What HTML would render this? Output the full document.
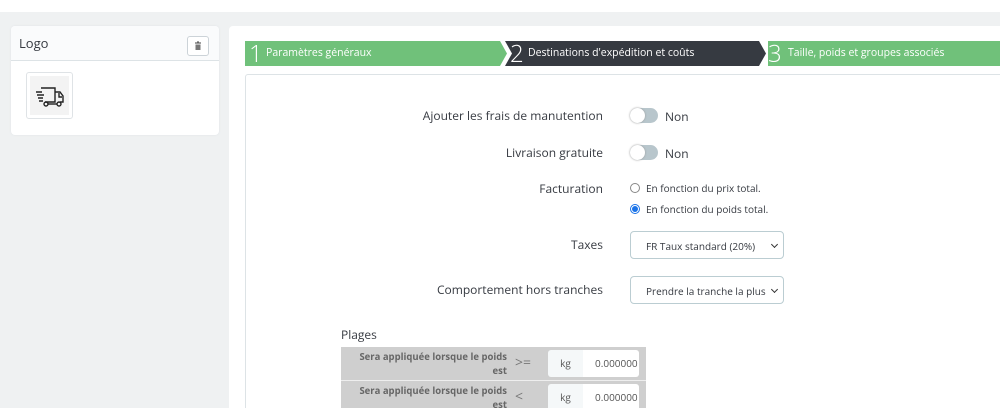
<!DOCTYPE html>
<html style="height:408px;overflow:hidden"><head><style>
body{margin:0;width:1000px;height:408px;overflow:hidden;background:#eff1f2;font-family:"Open Sans","Liberation Sans",sans-serif;color:#363a41;position:relative}
.top{position:absolute;left:0;top:0;width:1000px;height:12px;background:#fff}
.lp{position:absolute;left:11px;top:26px;width:208px;height:109px;background:#fff;border-radius:4px;box-shadow:0 0 2px #dfe3e6}
.lph{height:34px;border-bottom:1px solid #dde3e6;background:#fafbfc;border-radius:4px 4px 0 0}
.lph span{position:absolute;left:8px;top:8px;font-size:13px}
.del{position:absolute;left:176px;top:10px;width:20px;height:18px;border:1px solid #ccd3d8;border-radius:3px;background:#fff}
.logo{position:absolute;left:15px;top:46px;width:45px;height:45px;border:1px solid #dfe3e6;border-radius:3px;background:#fff}
.logo div{position:absolute;left:3px;top:3px;width:39px;height:39px;background:#f3f3f3}
.rp{position:absolute;left:229px;top:26px;width:771px;height:382px;background:#fff;border-radius:4px 0 0 0;overflow:hidden}
.step{position:absolute;top:15px;height:25px;color:#fff;font-size:10.5px;line-height:25px;white-space:nowrap}
.step b{font-weight:300;font-size:24px;position:absolute;top:0;line-height:26px}
.step span{position:absolute;top:0}
.inner{position:absolute;left:16px;top:48px;width:770px;height:340px;border:1px solid #dde3e6;border-radius:3px}
.lbl{position:absolute;right:397px;font-size:12px;text-align:right;white-space:nowrap}
.tg{position:absolute;left:630px;width:28px;height:15px;border-radius:8px;background:#b8c6cc}
.tg:after{content:"";position:absolute;left:0;top:0;width:15px;height:15px;border-radius:50%;background:#fff;box-shadow:0 0 2px #999}
.t{position:absolute;font-size:12px;white-space:nowrap}
.sel{position:absolute;left:630px;width:154px;height:28px;border:1px solid #bbcdd2;border-radius:4px;font-size:10px;line-height:28px;box-sizing:border-box;padding-left:15px;background:#fff;white-space:nowrap}
.sel:after{content:"";position:absolute;right:6px;top:10px;width:4px;height:4px;border-right:1.5px solid #333;border-bottom:1.5px solid #333;transform:rotate(45deg)}
.row{position:absolute;left:341px;width:305px;height:33px;background:#cfcfcf;border-bottom:1px solid #eee;overflow:hidden}
.row .l{position:absolute;right:139px;top:3px;font-size:9.5px;font-weight:bold;color:#666;text-align:right;line-height:14px;width:160px}
.row .op{position:absolute;left:174px;top:8px;color:#777;font-size:14px;line-height:16px}
.row .kg{position:absolute;left:207px;top:3px;width:35px;height:27px;background:#f5f8f9;font-size:10px;text-align:center;line-height:27px;color:#555;border-radius:3px 0 0 3px}
.row .v{position:absolute;left:242px;top:3px;width:56px;height:27px;background:#fff;font-size:10px;line-height:27px;padding-left:12px;box-sizing:border-box;overflow:hidden;white-space:nowrap;color:#555;border-radius:0 3px 3px 0}
</style></head><body>
<div class="top"></div>
<div class="lp"><div class="lph"><span>Logo</span>
<div class="del"><svg width="20" height="18" viewBox="0 0 20 18"><path d="M7 6h6M9 5h2" stroke="#666" stroke-width="1.2"/><path d="M7.5 7.5h5v5.5h-5z" fill="#777"/></svg></div></div>
<div class="logo"><div><svg width="39" height="39" viewBox="0 0 39 39"><g fill="none" stroke="#222" stroke-width="1.4"><path d="M11 12h14v14H15M25 16h5l3 4v6h-3M29 17v4h3"/><path d="M6 16h6M7 19h7M8 22h5M9 25h4"/><circle cx="16" cy="28" r="2"/><circle cx="29" cy="28" r="2"/><path d="M18 28h9"/></g></svg></div></div>
</div>
<div class="rp">
<svg style="position:absolute;left:16px;top:15px" width="760" height="25"><polygon points="0,0 255,0 262,12.5 255,25 0,25" fill="#70c17a"/><polygon points="260,0 514,0 521,12.5 514,25 260,25 267,12.5" fill="#363a41"/><polygon points="523,0 760,0 760,25 523,25" fill="#70c17a"/></svg>
<div class="step" style="left:16px"><b style="left:4px">1</b><span style="left:21px">Paramètres généraux</span></div>
<div class="step" style="left:276px"><b style="left:5px">2</b><span style="left:23px">Destinations d'expédition et coûts</span></div>
<div class="step" style="left:539px"><b style="left:0">3</b><span style="left:20px">Taille, poids et groupes associés</span></div>
<div class="inner"></div>
</div>
<div class="lbl" style="top:107px">Ajouter les frais de manutention</div>
<div class="tg" style="top:108px"></div><div class="t" style="left:665px;top:108px">Non</div>
<div class="lbl" style="top:144px">Livraison gratuite</div>
<div class="tg" style="top:145px"></div><div class="t" style="left:665px;top:145px">Non</div>
<div class="lbl" style="top:180px">Facturation</div>
<svg style="position:absolute;left:629px;top:183px" width="12" height="32"><circle cx="6" cy="5" r="4.5" fill="#fff" stroke="#888"/><circle cx="6" cy="26" r="4.5" fill="#fff" stroke="#1a73e8"/><circle cx="6" cy="26" r="3" fill="#1a73e8"/></svg>
<div class="t" style="left:646px;top:181px;font-size:10px">En fonction du prix total.</div>
<div class="t" style="left:646px;top:202px;font-size:10px">En fonction du poids total.</div>
<div class="lbl" style="top:236px">Taxes</div>
<div class="sel" style="top:231px">FR Taux standard (20%)</div>
<div class="lbl" style="top:281px">Comportement hors tranches</div>
<div class="sel" style="top:276px">Prendre la tranche la plus</div>
<div class="t" style="left:341px;top:326px">Plages</div>
<div class="row" style="top:347px"><div class="l">Sera appliquée lorsque le poids est</div><div class="op">&gt;=</div><div class="kg">kg</div><div class="v">0.000000</div></div>
<div class="row" style="top:381px;height:27px;border:0"><div class="l">Sera appliquée lorsque le poids est</div><div class="op">&lt;</div><div class="kg">kg</div><div class="v">0.000000</div></div>
</body></html>
